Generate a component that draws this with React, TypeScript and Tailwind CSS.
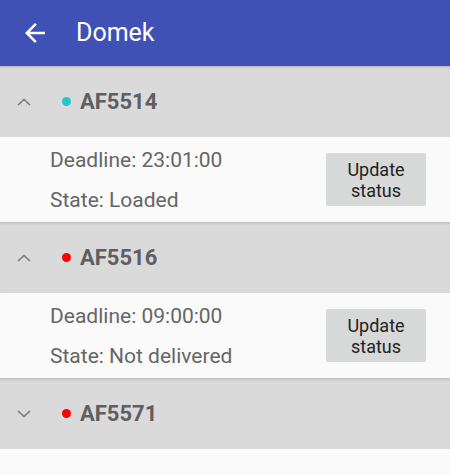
import { useState } from "react";

type Order = {
  id: string;
  color: string;
  deadline: string;
  state: string;
  open: boolean;
};

const orders: Order[] = [
  { id: "AF5514", color: "bg-[#20c9c9]", deadline: "23:01:00", state: "Loaded", open: true },
  { id: "AF5516", color: "bg-[#ff0000]", deadline: "09:00:00", state: "Not delivered", open: true },
  { id: "AF5571", color: "bg-[#ff0000]", deadline: "12:00:00", state: "New", open: false },
];

const Chevron = ({ up }: { up: boolean }) => (
  <svg width="16" height="10" viewBox="0 0 16 10" className="text-[#7a7a7a]">
    <path
      d={up ? "M2 8 L8 2.5 L14 8" : "M2 2 L8 7.5 L14 2"}
      fill="none"
      stroke="currentColor"
      strokeWidth="1.6"
    />
  </svg>
);

const OrderRow = ({ order }: { order: Order }) => {
  const [open, setOpen] = useState(order.open);
  return (
    <div>
      <div
        className="flex items-center h-[71px] bg-[#dadada] cursor-pointer shadow-[inset_0_3px_3px_-2px_rgba(0,0,0,0.18)]"
        onClick={() => setOpen(!open)}
      >
        <div className="w-[62px] pl-[16px] flex items-center">
          <Chevron up={open} />
        </div>
        <span className={`w-[9px] h-[9px] rounded-full ${order.color}`}></span>
        <span className="ml-[9px] text-[22px] font-bold text-[#5f5f5f]">{order.id}</span>
      </div>
      {open && (
        <div className="flex items-center justify-between h-[85px] bg-[#fafafa] pl-[50px] pr-[24px]">
          <div className="flex flex-col gap-[16px] text-[21px] leading-[24px] text-[#666666]">
            <span>Deadline: {order.deadline}</span>
            <span>State: {order.state}</span>
          </div>
          <button className="w-[100px] h-[53px] bg-[#d7d8d8] rounded-[2px] text-[18px] leading-[21px] text-[#222222]">
            Update
            <br />
            status
          </button>
        </div>
      )}
    </div>
  );
};

export default function App() {
  return (
    <div className="w-[450px] h-[475px] bg-[#fafafa] overflow-hidden font-['Roboto',sans-serif]">
      <div className="flex items-center h-[66px] bg-[#3f51b5] pl-[20px]">
        <svg width="30" height="30" viewBox="0 0 24 24">
          <path d="M20 11H7.83l5.59-5.59L12 4l-8 8 8 8 1.41-1.41L7.83 13H20v-2z" fill="white" />
        </svg>
        <span className="ml-[26px] text-[25px] text-white">Domek</span>
      </div>
      {orders.map((o) => (
        <OrderRow key={o.id} order={o} />
      ))}
    </div>
  );
}
